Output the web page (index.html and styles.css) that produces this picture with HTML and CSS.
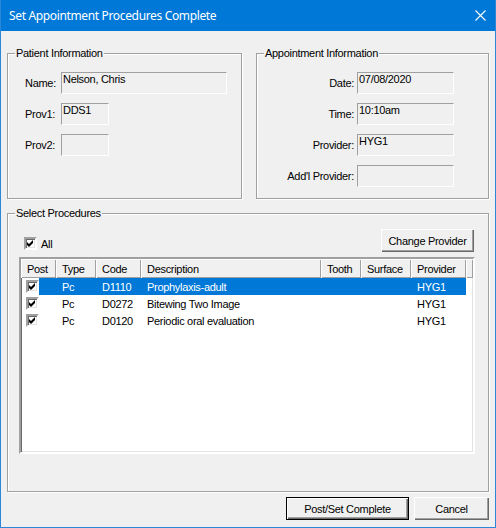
FILE: index.html
```html
<html>

<head>
  <meta name="description" content="Set Appointment Procedures Complete" />
  <link rel="stylesheet" href="styles.css">
</head>

<body>
  <div class="window">
    <div class="titlebar">
      <span class="title">Set Appointment Procedures Complete</span>
      <svg class="close" width="11" height="11" viewBox="0 0 11 11">
        <path d="M0.5 0.5 L10.5 10.5 M10.5 0.5 L0.5 10.5" stroke="#fff" stroke-width="1.1" fill="none" />
      </svg>
    </div>

    <div class="client">
      <div class="top-row">
        <fieldset class="group patient">
          <legend>Patient Information</legend>
          <div class="form patient-form">
            <span class="lbl">Name:</span>
            <div class="field name">Nelson, Chris</div>
            <span class="lbl">Prov1:</span>
            <div class="field prov">DDS1</div>
            <span class="lbl">Prov2:</span>
            <div class="field prov"></div>
          </div>
        </fieldset>

        <fieldset class="group appt">
          <legend>Appointment Information</legend>
          <div class="form appt-form">
            <span class="lbl">Date:</span>
            <div class="field appt-field">07/08/2020</div>
            <span class="lbl">Time:</span>
            <div class="field appt-field">10:10am</div>
            <span class="lbl">Provider:</span>
            <div class="field appt-field">HYG1</div>
            <span class="lbl">Add'l Provider:</span>
            <div class="field appt-field"></div>
          </div>
        </fieldset>
      </div>

      <fieldset class="group procs">
        <legend>Select Procedures</legend>
        <div class="procs-body">
          <div class="procs-bar">
            <label class="all">
              <span class="check"><svg width="9" height="9" viewBox="0 0 9 9"><polygon points="1,3 3,5 7,1 7,4 3,8 1,6" fill="#000" /></svg></span>
              All
            </label>
            <button class="btn change">Change Provider</button>
          </div>

          <div class="listview">
            <table class="grid">
              <colgroup>
                <col style="width: 35px">
                <col style="width: 40px">
                <col style="width: 45px">
                <col style="width: 180px">
                <col style="width: 40px">
                <col style="width: 50px">
                <col style="width: 55px">
                <col>
              </colgroup>
              <thead>
                <tr>
                  <th>Post</th>
                  <th>Type</th>
                  <th>Code</th>
                  <th>Description</th>
                  <th>Tooth</th>
                  <th>Surface</th>
                  <th>Provider</th>
                  <th></th>
                </tr>
              </thead>
              <tbody>
                <tr class="selected">
                  <td class="post"><span class="check"><svg width="9" height="9" viewBox="0 0 9 9"><polygon points="1,3 3,5 7,1 7,4 3,8 1,6" fill="#000" /></svg></span></td>
                  <td>Pc</td>
                  <td>D1110</td>
                  <td>Prophylaxis-adult</td>
                  <td></td>
                  <td></td>
                  <td>HYG1</td>
                  <td class="filler"></td>
                </tr>
                <tr>
                  <td class="post"><span class="check"><svg width="9" height="9" viewBox="0 0 9 9"><polygon points="1,3 3,5 7,1 7,4 3,8 1,6" fill="#000" /></svg></span></td>
                  <td>Pc</td>
                  <td>D0272</td>
                  <td>Bitewing Two Image</td>
                  <td></td>
                  <td></td>
                  <td>HYG1</td>
                  <td class="filler"></td>
                </tr>
                <tr>
                  <td class="post"><span class="check"><svg width="9" height="9" viewBox="0 0 9 9"><polygon points="1,3 3,5 7,1 7,4 3,8 1,6" fill="#000" /></svg></span></td>
                  <td>Pc</td>
                  <td>D0120</td>
                  <td>Periodic oral evaluation</td>
                  <td></td>
                  <td></td>
                  <td>HYG1</td>
                  <td class="filler"></td>
                </tr>
              </tbody>
            </table>
          </div>
        </div>
      </fieldset>

      <div class="actions">
        <button class="btn default post-btn">Post/Set Complete</button>
        <button class="btn cancel-btn">Cancel</button>
      </div>
    </div>
  </div>
</body>

</html>
```

FILE: styles.css
```css
* {
  box-sizing: border-box;
}

body {
  margin: 0;
  width: 496px;
  height: 528px;
  overflow: hidden;
  background-color: #f0f0f0;
  font-family: "Liberation Sans", Arial, sans-serif;
  font-size: 11px;
  letter-spacing: -0.3px;
  color: #000;
}

.window {
  width: 496px;
  height: 528px;
  border: 1px solid #2b87d8;
  border-top: 0;
  display: flex;
  flex-direction: column;
}

/* title bar */
.titlebar {
  height: 31px;
  background-color: #0078d7;
  color: white;
  display: flex;
  align-items: center;
  padding-left: 8px;
  font-family: "Noto Sans", "Open Sans", sans-serif;
  font-size: 12px;
  letter-spacing: -0.35px;
}

.close {
  margin-left: auto;
  margin-right: 9px;
}

.client {
  flex: 1;
  padding: 0 6px;
}

/* group boxes */
.top-row {
  display: flex;
  gap: 14px;
  margin-top: 16px;
  height: 152px;
}

.group {
  margin: 0;
  padding: 0;
  min-width: 0;
  border: 1px solid #a0a0a0;
  box-shadow: 1px 1px 0 #fff, inset 1px 1px 0 #fff;
}

.group legend {
  margin-left: 7px;
  padding: 0 1px;
  line-height: 13px;
  background-color: #f0f0f0;
}

.patient {
  width: 235px;
  height: 152px;
}

.appt {
  width: 233px;
  height: 152px;
}

.form {
  display: grid;
  row-gap: 9px;
  align-items: center;
  padding-top: 12px;
}

.patient-form {
  grid-template-columns: 36px auto;
  padding-left: 17px;
}

.appt-form {
  grid-template-columns: 87px auto;
  column-gap: 3px;
  padding-left: 10px;
}

.appt-form .lbl {
  text-align: right;
}

.field {
  height: 22px;
  padding: 0 1px;
  line-height: 13px;
  border: 1px solid;
  border-color: #a0a0a0 #fff #fff #a0a0a0;
  white-space: nowrap;
}

.field.name {
  width: 166px;
}

.field.prov {
  width: 48px;
}

.field.appt-field {
  width: 97px;
}

/* procedures */
.procs {
  width: 482px;
  height: 285px;
  margin-top: 8px;
}

.procs-body {
  padding: 9px 13px 0 11px;
}

.procs-bar {
  display: flex;
  align-items: flex-start;
  justify-content: space-between;
  height: 23px;
}

.all {
  display: flex;
  align-items: center;
  gap: 4px;
  margin-top: 8px;
  margin-left: 5px;
}

.check {
  display: inline-block;
  width: 13px;
  height: 13px;
  background-color: #fff;
  border: 2px solid;
  border-color: #a0a0a0 #fff #fff #a0a0a0;
  box-shadow: inset 1px 1px 0 #696969, inset -1px -1px 0 #e3e3e3;
  vertical-align: middle;
}

.check svg {
  display: block;
}

.listview {
  margin-top: 5px;
  height: 197px;
  border: 2px solid;
  border-color: #a0a0a0 #fff #fff #a0a0a0;
  box-shadow: inset 1px 1px 0 #696969, inset -1px -1px 0 #e3e3e3;
  background-color: #fff;
  padding: 1px;
}

.grid {
  width: 452px;
  margin: -1px;
  table-layout: fixed;
  border-collapse: collapse;
  border-spacing: 0;
  font: inherit;
  letter-spacing: inherit;
}

.grid th {
  height: 19px;
  padding: 0 0 0 6px;
  text-align: left;
  font-weight: normal;
  background-color: #f0f0f0;
  box-shadow: inset 1px 1px 0 #fff, inset -1px -1px 0 #a0a0a0;
  white-space: nowrap;
  overflow: hidden;
}

.grid td {
  height: 17px;
  padding: 0 0 0 6px;
  white-space: nowrap;
  overflow: hidden;
}

.grid td.post {
  padding-left: 5px;
  line-height: 0;
}

.grid tr.selected td {
  background-color: #0078d7;
  color: #fff;
}

.grid tr.selected td.post {
  background: linear-gradient(to right, transparent 18px, #0078d7 18px);
}

.grid tr.selected td.filler {
  background: none;
}

/* buttons */
.btn {
  height: 23px;
  padding: 0;
  border: 0;
  background-color: #f0f0f0;
  font-family: "Liberation Sans", Arial, sans-serif;
  font-size: 11px;
  letter-spacing: -0.3px;
  color: #000;
  box-shadow: inset 1px 1px 0 #fff, inset -1px -1px 0 #696969, inset -2px -2px 0 #a0a0a0;
}

.btn.default {
  border: 1px solid #000;
  box-shadow: inset 1px 1px 0 #fff, inset -1px -1px 0 #696969, inset -2px -2px 0 #a0a0a0;
}

.change {
  width: 93px;
  margin-right: 1px;
}

.actions {
  display: flex;
  justify-content: flex-end;
  gap: 5px;
  margin-top: 5px;
}

.post-btn {
  width: 123px;
}

.cancel-btn {
  width: 75px;
}
```
